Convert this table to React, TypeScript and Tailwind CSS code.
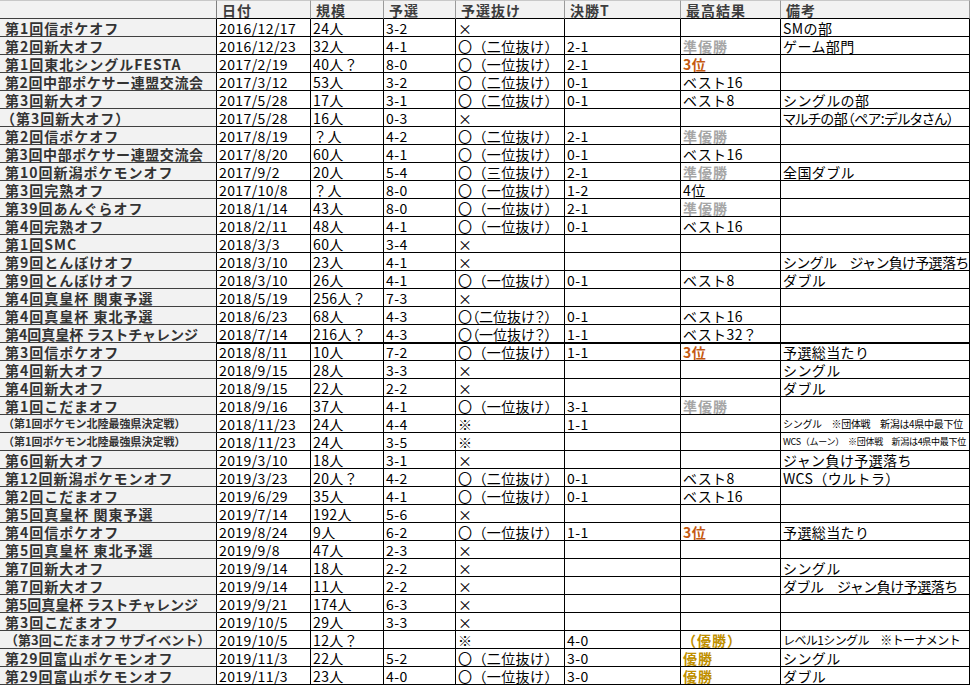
import React from "react";

type Row = {
  n: string;
  d: string;
  s: string;
  p: string;
  pp: string;
  f: string;
  b: string;
  bc?: "g" | "o" | "y" | "";
  note: string;
  nameCls?: string;
  noteCls?: string;
  bestExtra?: string;
  thick?: boolean;
};

const rows: Row[] = [
  { n: "第1回信ポケオフ", d: "2016/12/17", s: "24人", p: "3-2", pp: "×", f: "", b: "", note: "SMの部" },
  { n: "第2回新大オフ", d: "2016/12/23", s: "32人", p: "4-1", pp: "〇（二位抜け）", f: "2-1", b: "準優勝", bc: "g", note: "ゲーム部門" },
  { n: "第1回東北シングルFESTA", d: "2017/2/19", s: "40人？", p: "8-0", pp: "〇（一位抜け）", f: "2-1", b: "3位", bc: "o", note: "" },
  { n: "第2回中部ポケサー連盟交流会", d: "2017/3/12", s: "53人", p: "3-2", pp: "〇（二位抜け）", f: "0-1", b: "ベスト16", note: "", nameCls: "tracking-[0.6px]" },
  { n: "第3回新大オフ", d: "2017/5/28", s: "17人", p: "3-1", pp: "〇（二位抜け）", f: "0-1", b: "ベスト8", note: "シングルの部" },
  { n: "（第3回新大オフ）", d: "2017/5/28", s: "16人", p: "0-3", pp: "×", f: "", b: "", note: "マルチの部（ペア:デルタさん）", nameCls: "-ml-[4px]", noteCls: "tracking-[-0.3px] [font-feature-settings:'palt']" },
  { n: "第2回信ポケオフ", d: "2017/8/19", s: "？人", p: "4-2", pp: "〇（二位抜け）", f: "2-1", b: "準優勝", bc: "g", note: "" },
  { n: "第3回中部ポケサー連盟交流会", d: "2017/8/20", s: "60人", p: "4-1", pp: "〇（一位抜け）", f: "0-1", b: "ベスト16", note: "", nameCls: "tracking-[0.6px]" },
  { n: "第10回新潟ポケモンオフ", d: "2017/9/2", s: "20人", p: "5-4", pp: "〇（三位抜け）", f: "2-1", b: "準優勝", bc: "g", note: "全国ダブル" },
  { n: "第3回完熟オフ", d: "2017/10/8", s: "？人", p: "8-0", pp: "〇（一位抜け）", f: "1-2", b: "4位", note: "" },
  { n: "第39回あんぐらオフ", d: "2018/1/14", s: "43人", p: "8-0", pp: "〇（一位抜け）", f: "2-1", b: "準優勝", bc: "g", note: "" },
  { n: "第4回完熟オフ", d: "2018/2/11", s: "48人", p: "4-1", pp: "〇（一位抜け）", f: "0-1", b: "ベスト16", note: "" },
  { n: "第1回SMC", d: "2018/3/3", s: "60人", p: "3-4", pp: "×", f: "", b: "", note: "" },
  { n: "第9回とんぼけオフ", d: "2018/3/10", s: "23人", p: "4-1", pp: "×", f: "", b: "", note: "シングル　ジャン負け予選落ち", noteCls: "tracking-[-0.7px]" },
  { n: "第9回とんぼけオフ", d: "2018/3/10", s: "26人", p: "4-1", pp: "〇（一位抜け）", f: "0-1", b: "ベスト8", note: "ダブル" },
  { n: "第4回真皇杯 関東予選", d: "2018/5/19", s: "256人？", p: "7-3", pp: "×", f: "", b: "", note: "" },
  { n: "第4回真皇杯 東北予選", d: "2018/6/23", s: "68人", p: "4-3", pp: "〇（二位抜け？）", f: "0-1", b: "ベスト16", note: "" },
  { n: "第4回真皇杯 ラストチャレンジ", d: "2018/7/14", s: "216人？", p: "4-3", pp: "〇（一位抜け？）", f: "1-1", b: "ベスト32？", note: "", nameCls: "tracking-[0px]" },
  { n: "第3回信ポケオフ", d: "2018/8/11", s: "10人", p: "7-2", pp: "〇（一位抜け）", f: "1-1", b: "3位", bc: "o", note: "予選総当たり", thick: true },
  { n: "第4回新大オフ", d: "2018/9/15", s: "28人", p: "3-3", pp: "×", f: "", b: "", note: "シングル" },
  { n: "第4回新大オフ", d: "2018/9/15", s: "22人", p: "2-2", pp: "×", f: "", b: "", note: "ダブル" },
  { n: "第1回こだまオフ", d: "2018/9/16", s: "37人", p: "4-1", pp: "〇（一位抜け）", f: "3-1", b: "準優勝", bc: "g", note: "" },
  { n: "（第1回ポケモン北陸最強県決定戦）", d: "2018/11/23", s: "24人", p: "4-4", pp: "※", f: "1-1", b: "", note: "シングル　※団体戦　新潟は4県中最下位", nameCls: "text-[11px] tracking-[0px] -ml-[2px]", noteCls: "text-[10px] tracking-[-0.3px]" },
  { n: "（第1回ポケモン北陸最強県決定戦）", d: "2018/11/23", s: "24人", p: "3-5", pp: "※", f: "", b: "", note: "WCS（ムーン）　※団体戦　新潟は4県中最下位", nameCls: "text-[11px] tracking-[0px] -ml-[2px]", noteCls: "text-[9px] tracking-[-0.3px]" },
  { n: "第6回新大オフ", d: "2019/3/10", s: "18人", p: "3-1", pp: "×", f: "", b: "", note: "ジャン負け予選落ち" },
  { n: "第12回新潟ポケモンオフ", d: "2019/3/23", s: "20人？", p: "4-2", pp: "〇（二位抜け）", f: "0-1", b: "ベスト8", note: "WCS（ウルトラ）" },
  { n: "第2回こだまオフ", d: "2019/6/29", s: "35人", p: "4-1", pp: "〇（一位抜け）", f: "0-1", b: "ベスト16", note: "" },
  { n: "第5回真皇杯 関東予選", d: "2019/7/14", s: "192人", p: "5-6", pp: "×", f: "", b: "", note: "" },
  { n: "第4回信ポケオフ", d: "2019/8/24", s: "9人", p: "6-2", pp: "〇（一位抜け）", f: "1-1", b: "3位", bc: "o", note: "予選総当たり" },
  { n: "第5回真皇杯 東北予選", d: "2019/9/8", s: "47人", p: "2-3", pp: "×", f: "", b: "", note: "" },
  { n: "第7回新大オフ", d: "2019/9/14", s: "18人", p: "2-2", pp: "×", f: "", b: "", note: "シングル" },
  { n: "第7回新大オフ", d: "2019/9/14", s: "11人", p: "2-2", pp: "×", f: "", b: "", note: "ダブル　ジャン負け予選落ち", noteCls: "tracking-[-0.5px]" },
  { n: "第5回真皇杯 ラストチャレンジ", d: "2019/9/21", s: "174人", p: "6-3", pp: "×", f: "", b: "", note: "", nameCls: "tracking-[0px]" },
  { n: "第3回こだまオフ", d: "2019/10/5", s: "29人", p: "3-3", pp: "×", f: "", b: "", note: "" },
  { n: "（第3回こだまオフ サブイベント）", d: "2019/10/5", s: "12人？", p: "", pp: "※", f: "4-0", b: "（優勝）", bc: "y", bestExtra: "-ml-[1px]", note: "レベル1シングル　※トーナメント", nameCls: "tracking-[0px] text-[13px]", noteCls: "text-[12px] tracking-[-0.6px]" },
  { n: "第29回富山ポケモンオフ", d: "2019/11/3", s: "22人", p: "5-2", pp: "〇（二位抜け）", f: "3-0", b: "優勝", bc: "y", note: "シングル" },
  { n: "第29回富山ポケモンオフ", d: "2019/11/3", s: "23人", p: "4-0", pp: "〇（一位抜け）", f: "3-0", b: "優勝", bc: "y", note: "ダブル" },
];

const widths = ["w-[217px]", "w-[94px]", "w-[73px]", "w-[72px]", "w-[109px]", "w-[116px]", "w-[100px]", "w-[189px]"];

const headers = ["", "日付", "規模", "予選", "予選抜け", "決勝T", "最高結果", "備考"];

function bestCls(bc?: string) {
  if (bc === "g") return "font-bold text-[#a6a6a6] tracking-[1px]";
  if (bc === "o") return "font-bold text-[#c55a11]";
  if (bc === "y") return "font-bold text-[#bf8f00] tracking-[1px]";
  return "";
}

export default function App() {
  return (
    <div
      className="w-[972px] h-[685px] bg-white overflow-hidden text-[14px] text-black"
      style={{ fontFamily: '"Noto Sans CJK JP", "Noto Sans", sans-serif' }}
    >
      {/* header */}
      <div className="flex h-[19px]">
        {headers.map((h, i) => (
          <div
            key={i}
            className={`${widths[i]} h-[19px] shrink-0 bg-[#f2f2f2] border-b border-r ${
              i === 0 ? "border-b-[#404040] border-r-[#808080]" : "border-b-black border-r-[#9a9a9a]"
            } border-t border-t-[#c8c8c8] flex items-center pl-[5px] font-bold text-[#3d3d3d] tracking-[1px] leading-none whitespace-nowrap overflow-hidden`}
          >
            {h}
          </div>
        ))}
      </div>
      {rows.map((r, ri) => {
        const cells = [r.d, r.s, r.p, r.pp, r.f, r.b, r.note];
        return (
          <div key={ri} className="flex h-[18px]">
            <div
              className={`${widths[0]} h-[18px] shrink-0 bg-[#f2f2f2] border-b border-r border-b-[#404040] border-r-black flex items-center pl-[5px] font-bold text-[#333] leading-none whitespace-nowrap overflow-hidden tracking-[1px]`}
            >
              <span className={r.nameCls ?? ""}>{r.n}</span>
            </div>
            {cells.map((c, ci) => {
              const col = ci + 1;
              let extra = "";
              if (col === 4 && c.includes("？")) extra = "tracking-[0px] [font-feature-settings:'palt']";
              if (col === 6) extra = `${bestCls(r.bc)} ${r.bestExtra ?? ""}`;
              if (col === 7) extra = r.noteCls ?? "";
              return (
                <div
                  key={ci}
                  className={`${widths[col]} h-[18px] shrink-0 border-b border-r border-black flex items-center pl-[2px] leading-none whitespace-nowrap overflow-hidden tracking-[0.4px] ${
                    r.thick ? "shadow-[inset_0_1px_0_#000]" : ""
                  }`}
                >
                  <span className={extra}>{c}</span>
                </div>
              );
            })}
          </div>
        );
      })}
    </div>
  );
}
